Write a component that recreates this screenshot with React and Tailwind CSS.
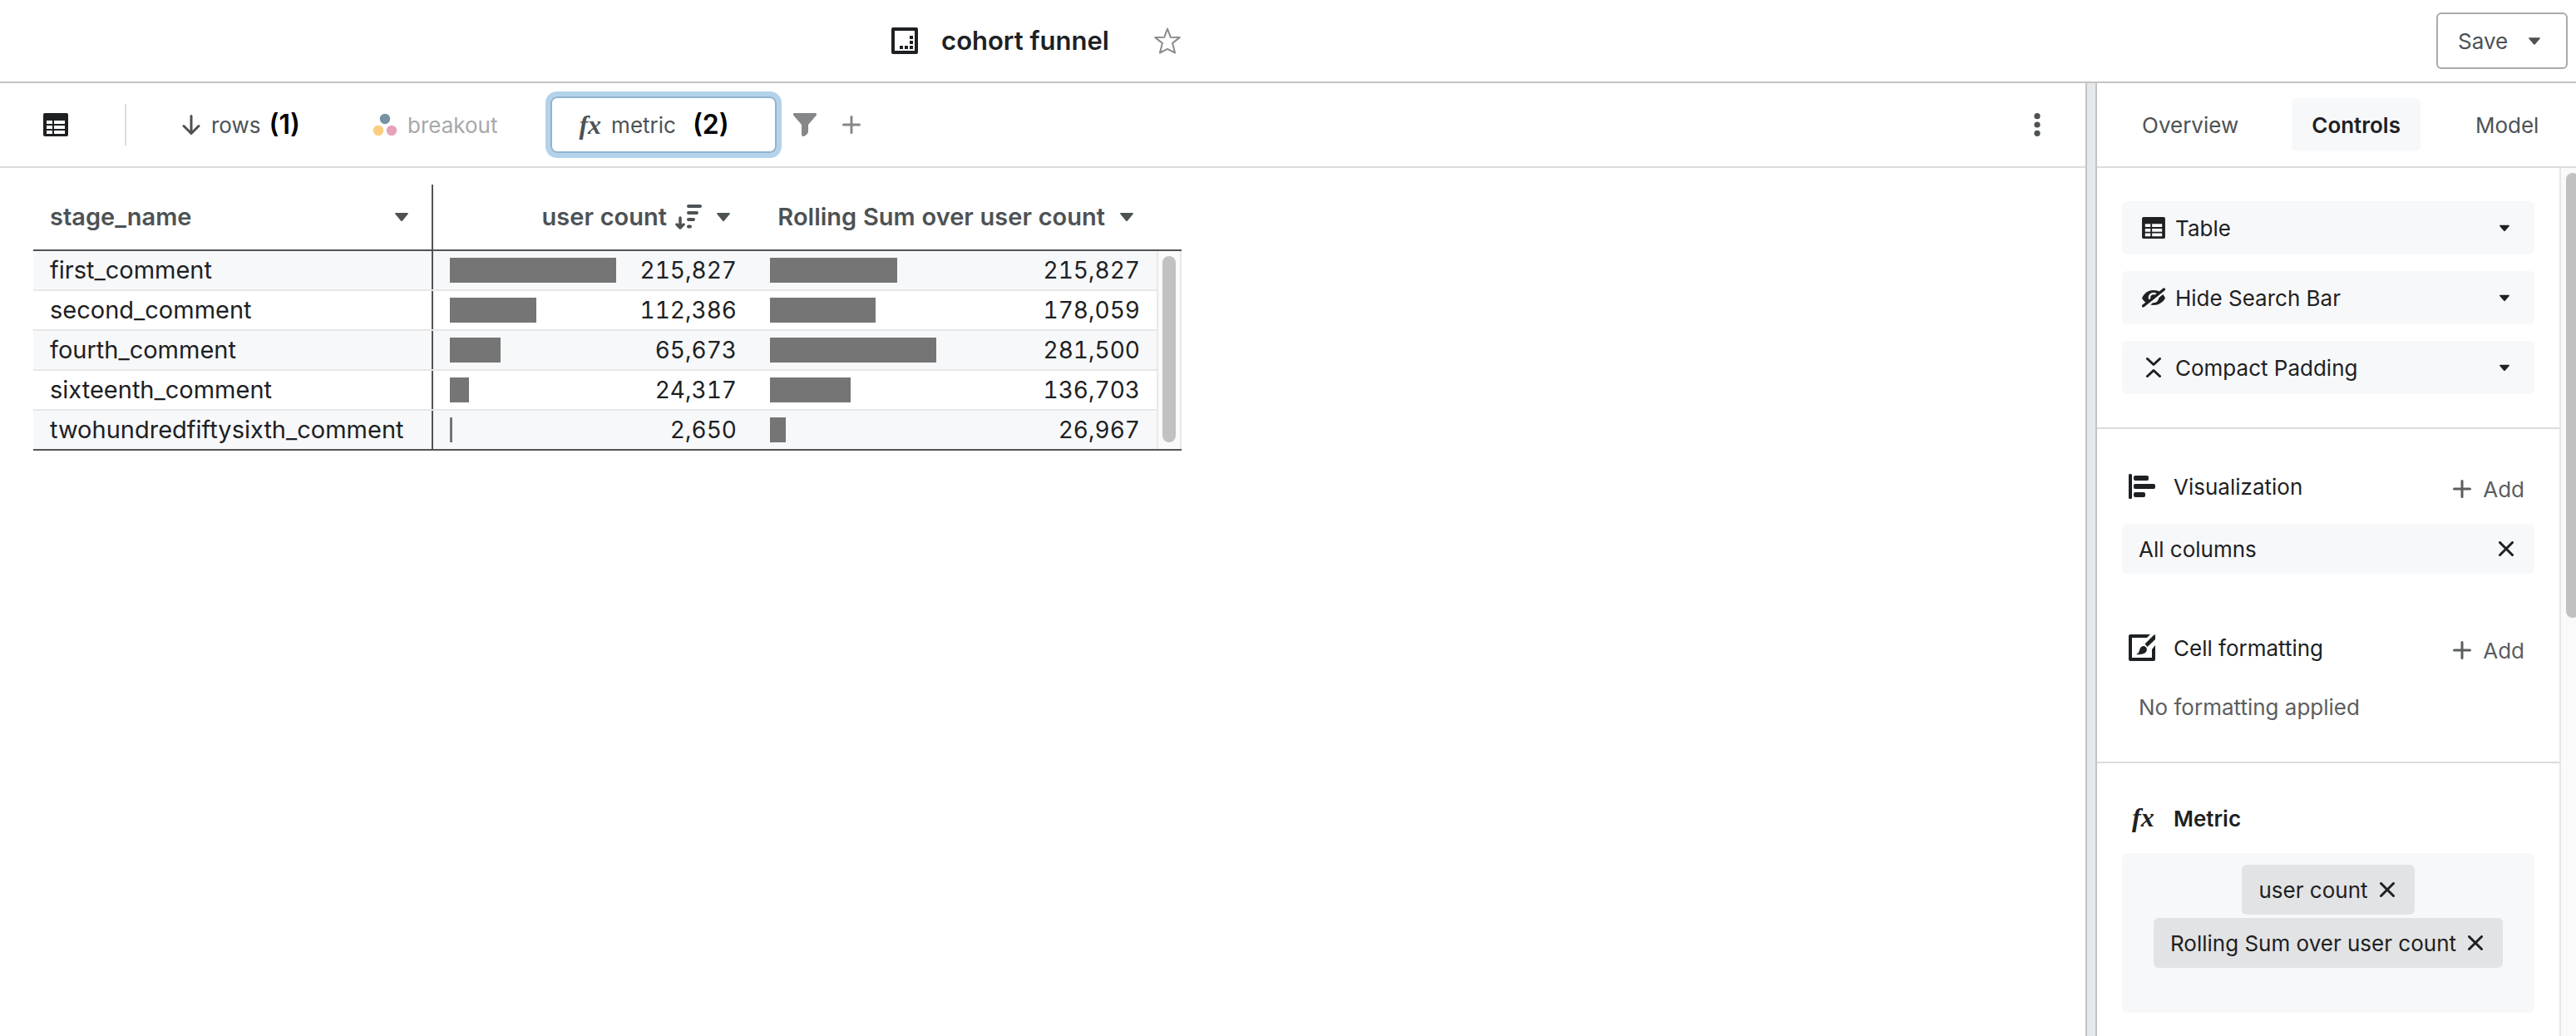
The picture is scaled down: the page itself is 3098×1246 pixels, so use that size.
import React from "react";

const rows = [
  { name: "first_comment", count: 215827, rolling: 215827 },
  { name: "second_comment", count: 112386, rolling: 178059 },
  { name: "fourth_comment", count: 65673, rolling: 281500 },
  { name: "sixteenth_comment", count: 24317, rolling: 136703 },
  { name: "twohundredfiftysixth_comment", count: 2650, rolling: 26967 },
];
const maxCount = Math.max(...rows.map((r) => r.count));
const maxRolling = Math.max(...rows.map((r) => r.rolling));

function Caret({ className }) {
  return (
    <svg viewBox="0 0 16 10" className={className} fill="currentColor" aria-hidden="true">
      <path d="M1 0h14c.8 0 1.2 1 .6 1.600l-6.600 7.800c-.5.700-1.500.700-2 0L.4 1.600C-.2 1 .2 0 1 0z" />
    </svg>
  );
}

function TableIcon({ className }) {
  return (
    <svg viewBox="0 0 30 28" className={className} fill="currentColor" fillRule="evenodd" aria-hidden="true">
      <path d="M2 0h26a2 2 0 0 1 2 2v24a2 2 0 0 1-2 2H2a2 2 0 0 1-2-2V2a2 2 0 0 1 2-2zM4 9h7v4H4zM13 9h13v4H13zM4 15h7v4H4zM13 15h13v4H13zM4 21h7v4H4zM13 21h13v4H13z" />
    </svg>
  );
}

function Plus({ className }) {
  return (
    <svg viewBox="0 0 22 22" className={className} fill="none" stroke="currentColor" strokeWidth="3" strokeLinecap="round" aria-hidden="true">
      <path d="M11 1.500v19M1.500 11h19" />
    </svg>
  );
}

function Cross({ className }) {
  return (
    <svg viewBox="0 0 18 18" className={className} fill="none" stroke="currentColor" strokeWidth="3" strokeLinecap="round" aria-hidden="true">
      <path d="M1.500 1.500l15 15M16.500 1.500l-15 15" />
    </svg>
  );
}

function Fx() {
  return <span className="font-['Liberation_Serif',serif] text-[32px] leading-8 font-bold italic" aria-hidden="true">fx</span>;
}

function EyeOff() {
  return (
    <svg viewBox="0 0 28 24" className="h-6 w-7" aria-hidden="true">
      <path d="M0 12.500C3 6 8 3 14 3s11 3 14 9.500C25 18 20 21 14 21S3 18 0 12.500z" fill="#1d2123" />
      <circle cx="14" cy="12" r="5" fill="none" stroke="#f7f8fa" strokeWidth="2.500" />
      <path d="M4.500 23.500L28.500 3.500" stroke="#f7f8fa" strokeWidth="3" />
      <path d="M1.500 22L26.500 2" stroke="#1d2123" strokeWidth="3.400" strokeLinecap="round" />
    </svg>
  );
}

function Compact() {
  return (
    <svg viewBox="0 0 28 24" className="h-6 w-7" fill="none" stroke="#1d2123" strokeWidth="3" strokeLinecap="round" strokeLinejoin="round" aria-hidden="true">
      <path d="M6.500 1.500l7.500 7 7.500-7M6.500 22.500l7.500-7 7.500 7" />
    </svg>
  );
}

function Bar({ value, max }) {
  return (
    <div className="flex w-[200px] shrink-0">
      <div className="h-[30px] min-w-[3px] bg-[#757575]" style={{ width: `${(value / max) * 100}%` }} />
    </div>
  );
}

function HeaderButton({ children, className = "" }) {
  return (
    <button type="button" className={"flex h-[78px] w-full items-center pl-5 pr-7 " + className}>
      {children}
    </button>
  );
}

function DataTable() {
  return (
    <div className="flex">
      <table className="w-[1351px] table-fixed border-separate border-spacing-0 text-[28px] tabular-nums text-[#1d2123]">
        <colgroup>
          <col className="w-[481px]" />
          <col className="w-[385px]" />
          <col className="w-[485px]" />
        </colgroup>
        <thead className="text-[29px] text-[#4d5255]">
          <tr>
            <th className="border-b-2 border-[#515457] p-0 font-semibold">
              <div className="border-r-2 border-[#515457]">
                <HeaderButton className="justify-between">
                  stage_name
                  <Caret className="h-2.5 w-4" />
                </HeaderButton>
              </div>
            </th>
            <th className="border-b-2 border-[#515457] p-0 font-semibold">
              <HeaderButton className="justify-end">
                user count
                <svg viewBox="0 0 32 30" className="ml-2.5 h-[30px] w-8" fill="none" stroke="currentColor" strokeWidth="4" strokeLinecap="round" aria-hidden="true">
                  <path d="M16 2h14M16 10h10M16 18h6M16 26.500h2" />
                  <path d="M6 16v10M2 24l4 4 4-4" strokeWidth="3.500" strokeLinejoin="round" />
                </svg>
                <Caret className="ml-[18px] h-2.5 w-4" />
              </HeaderButton>
            </th>
            <th className="border-b-2 border-[#515457] p-0 font-semibold">
              <HeaderButton className="justify-end">
                Rolling Sum over user count
                <Caret className="ml-[18px] h-2.5 w-4" />
              </HeaderButton>
            </th>
          </tr>
        </thead>
        <tbody>
          {rows.map((r) => (
            <tr key={r.name} className="group odd:bg-[#f7f8fa]">
              <td className="border-b-2 border-[#e6e7e8] p-0 group-last:border-[#515457]">
                <div className="flex h-[46px] items-center border-r-2 border-[#515457] pl-5 text-[29px]">{r.name}</div>
              </td>
              <td className="border-b-2 border-[#e6e7e8] p-0 group-last:border-[#515457]">
                <div className="flex h-[46px] items-center justify-between px-5">
                  <Bar value={r.count} max={maxCount} />
                  {r.count.toLocaleString("en-US")}
                </div>
              </td>
              <td className="border-b-2 border-[#e6e7e8] p-0 group-last:border-[#515457]">
                <div className="flex h-[46px] items-center justify-between px-5">
                  <Bar value={r.rolling} max={maxRolling} />
                  {r.rolling.toLocaleString("en-US")}
                </div>
              </td>
            </tr>
          ))}
        </tbody>
      </table>
      <div className="flex w-[30px] flex-col">
        <div className="h-20 border-b-2 border-[#515457]" />
        <div className="flex flex-1 flex-col border-b-2 border-[#515457]">
          <div className="flex flex-1 justify-center border-x-2 border-[#e8e8e8] bg-[#fafafa] pt-1.5 pb-2">
            <div className="w-4 rounded-full bg-[#c1c1c1]" />
          </div>
        </div>
      </div>
    </div>
  );
}

function Toolbar() {
  return (
    <div className="flex h-[102px] items-center border-b-2 border-[#dcdcdc] pl-[52px] text-[26px] text-[#4d5255]">
      <button type="button" aria-label="Table view" className="text-[#1d2123]">
        <TableIcon className="h-7 w-[30px]" />
      </button>
      <div className="ml-[68px] h-[50px] w-0.5 bg-[#dcdcdc]" />
      <button type="button" className="ml-[66px] flex w-[150px] items-center">
        <svg viewBox="0 0 24 24" className="h-6 w-6 shrink-0" fill="none" stroke="currentColor" strokeWidth="3" strokeLinecap="round" strokeLinejoin="round" aria-hidden="true">
          <path d="M12 1.500v21M3 13.500l9 9 9-9" />
        </svg>
        <span className="ml-3">rows</span>
        <span className="ml-2.5 text-[32px] leading-8 font-semibold text-black">(1)</span>
      </button>
      <button type="button" className="ml-20 flex items-center text-[#a6a8aa]">
        <svg viewBox="0 0 30 28" className="h-7 w-[30px]" aria-hidden="true">
          <circle cx="15" cy="7" r="6.200" fill="#7892a2" />
          <circle cx="7" cy="21" r="6.200" fill="#fbcd7f" />
          <circle cx="23" cy="21" r="6.200" fill="#e6a2bb" />
        </svg>
        <span className="ml-3">breakout</span>
      </button>
      <button type="button" className="ml-16 flex h-[68px] w-[272px] items-center rounded-lg border-2 border-[#92b2cf] pl-8 shadow-[0_0_0_6px_#b2d3ea]">
        <Fx />
        <span className="ml-3">metric</span>
        <span className="ml-5 text-[32px] leading-8 font-semibold text-black">(2)</span>
      </button>
      <button type="button" aria-label="Filter" className="ml-5 text-[#868789]">
        <svg viewBox="0 0 28 28" className="h-7 w-7" fill="currentColor" aria-hidden="true">
          <path d="M1.500 0h25c1.400 0 2 1.500 1.200 2.700L18 14v8.500c0 2-3.500 5.500-6 5.500-1.200 0-2-.8-2-2V14L.3 2.700C-.5 1.500.1 0 1.500 0z" />
        </svg>
      </button>
      <button type="button" aria-label="Add" className="ml-[31px] text-[#868789]">
        <Plus className="h-[22px] w-[22px]" />
      </button>
      <button type="button" aria-label="More" className="mr-[54px] ml-auto">
        <svg viewBox="0 0 8 28" className="h-7 w-2" fill="currentColor" aria-hidden="true">
          <circle cx="4" cy="3.700" r="3.600" />
          <circle cx="4" cy="14" r="3.600" />
          <circle cx="4" cy="24.300" r="3.600" />
        </svg>
      </button>
    </div>
  );
}

function Dropdown({ label, value, icon }) {
  return (
    <label className="grid items-center rounded-md bg-[#f7f8fa]">
      <span className="z-10 col-start-1 row-start-1 ml-6">{icon}</span>
      <select aria-label={label} className="col-start-1 row-start-1 h-16 w-full appearance-none rounded-md bg-[#f7f8fa] pl-16">
        <option>{value}</option>
      </select>
      <Caret className="z-10 col-start-1 row-start-1 mr-[30px] h-[9px] w-3 justify-self-end" />
    </label>
  );
}

function SectionTitle({ icon, children, bold, add }) {
  return (
    <div className="flex h-10 items-center">
      <span className="ml-2 flex w-[54px] items-center">{icon}</span>
      <h2 className={bold ? "font-semibold" : ""}>{children}</h2>
      {add && (
        <button type="button" className="mt-1.5 mr-3 ml-auto flex items-center gap-3.5 text-[#5b5e60]">
          <Plus className="h-[22px] w-[22px]" />
          Add
        </button>
      )}
    </div>
  );
}

function Chip({ children }) {
  return (
    <div className="flex h-[60px] items-center gap-3.5 rounded-md bg-[#e2e3e4] pr-6 pl-5">
      {children}
      <button type="button" aria-label={"Remove " + children}>
        <Cross className="h-[18px] w-[18px]" />
      </button>
    </div>
  );
}

function Sidebar() {
  return (
    <aside className="flex w-[576px] shrink-0 flex-col overflow-hidden text-[26px] text-[#1d2123]">
      <nav className="flex h-[102px] shrink-0 items-center border-b-2 border-[#dcdcdc] pl-[30px] text-[#4d5255]">
        <button type="button" className="h-16 px-6">Overview</button>
        <button type="button" className="ml-10 h-16 rounded-md bg-[#f7f8fa] px-6 font-semibold text-[#1d2123]">Controls</button>
        <button type="button" className="ml-[42px] h-16 px-6">Model</button>
      </nav>
      <div className="flex min-h-0 flex-1">
        <div className="flex-1 overflow-hidden">
          <section className="flex flex-col gap-5 border-b-2 border-[#dcdcdc] px-[30px] py-10">
            <Dropdown label="Element type" value="Table" icon={<TableIcon className="h-[26px] w-7" />} />
            <Dropdown label="Search bar" value="Hide Search Bar" icon={<EyeOff />} />
            <Dropdown label="Padding" value="Compact Padding" icon={<Compact />} />
          </section>
          <section className="border-b-2 border-[#dcdcdc] px-[30px] pt-[49px] pb-[45px]">
            <SectionTitle
              add
              icon={
                <svg viewBox="0 0 32 30" className="h-[30px] w-8" fill="currentColor" aria-hidden="true">
                  <rect width="4" height="30" rx="1.500" />
                  <rect x="6" y="2" width="18" height="6" rx="2" />
                  <rect x="6" y="12" width="26" height="6" rx="2" />
                  <rect x="6" y="22" width="14" height="6" rx="2" />
                </svg>
              }
            >
              Visualization
            </SectionTitle>
            <div className="mt-[25px] flex h-[60px] items-center justify-between rounded-md bg-[#f7f8fa] pr-[25px] pl-5">
              All columns
              <button type="button" aria-label="Remove All columns">
                <Cross className="h-[18px] w-[18px]" />
              </button>
            </div>
            <div className="mt-[69px]">
              <SectionTitle
                add
                icon={
                  <svg viewBox="0 0 32 32" className="h-8 w-8" fill="currentColor" aria-hidden="true">
                    <path d="M2 0h24l-4 4H4v24h24V18l4-5v17a2 2 0 0 1-2 2H2a2 2 0 0 1-2-2V2a2 2 0 0 1 2-2z" />
                    <path d="M19.500 11.500L29.500 1.500 32 0v6l-9.500 9z" />
                    <path d="M9 24c3-1 3.500-3 4.500-6.500 1-3 4.500-4.500 7-2.500 2.500 2.500 1.500 6-1.500 7.800C16.500 24 12.500 24.500 9 24z" />
                  </svg>
                }
              >
                Cell formatting
              </SectionTitle>
            </div>
            <p className="mt-8 pl-5 leading-10 text-[#5b5e60]">No formatting applied</p>
          </section>
          <section className="px-[30px] pt-[46px]">
            <SectionTitle bold icon={<span className="ml-1"><Fx /></span>}>
              Metric
            </SectionTitle>
            <div className="mt-[22px] flex h-48 flex-col items-center gap-1 rounded-md bg-[#f7f8fa] pt-3.5">
              <Chip>user count</Chip>
              <Chip>Rolling Sum over user count</Chip>
            </div>
          </section>
        </div>
        <div className="w-5 border-l-2 border-[#e6e6e6] bg-[#fafafa] pt-1.5 pl-1.5">
          <div className="h-[535px] w-4 rounded-full bg-[#c1c1c1]" />
        </div>
      </div>
    </aside>
  );
}

export default function App() {
  return (
    <div className="flex h-screen flex-col overflow-hidden bg-white font-[Inter,sans-serif]">
      <header className="flex h-[100px] shrink-0 items-center border-b-2 border-[#c4c4c4]">
        <div className="flex flex-1 items-center justify-center pr-4">
          <svg viewBox="0 0 32 32" className="h-8 w-8" fill="#1d2123" fillRule="evenodd" aria-hidden="true">
            <path d="M2 0h28a2 2 0 0 1 2 2v28a2 2 0 0 1-2 2H2a2 2 0 0 1-2-2V2a2 2 0 0 1 2-2zM4 4v24h24V4zM22 10h4v4h-4zM22 16h4v4h-4zM22 22h4v4h-4zM16 22h4v4h-4zM10 22h4v4h-4z" />
          </svg>
          <h1 className="ml-7 text-[31px] font-semibold text-[#1d2123]">cohort funnel</h1>
          <button type="button" aria-label="Favorite" className="ml-[54px]">
            <svg viewBox="0 0 32 32" className="h-8 w-8" fill="none" stroke="#8a8c8e" strokeWidth="2" strokeLinejoin="round" aria-hidden="true">
              <path d="M16 1.500l3.700 10.200 11 .4-8.600 6.800 3 11.600L16 25.800l-9.100 4.700 3-11.600L1.300 12.100l11-.4z" />
            </svg>
          </button>
        </div>
        <div className="flex w-[590px] justify-end pr-2.5">
          <button type="button" className="flex h-[68px] w-[158px] items-center rounded-md border-2 border-[#ababab] pl-6 text-[26px] text-[#4d5255]">
            Save
            <Caret className="ml-[25px] h-[9px] w-3.5" />
          </button>
        </div>
      </header>
      <div className="flex min-h-0 flex-1">
        <main className="min-w-0 flex-1">
          <Toolbar />
          <div className="px-10 pt-5">
            <DataTable />
          </div>
        </main>
        <div className="w-3.5 shrink-0 border-x-2 border-[#c4c4c4] bg-[#e6e9eb]" />
        <Sidebar />
      </div>
    </div>
  );
}
